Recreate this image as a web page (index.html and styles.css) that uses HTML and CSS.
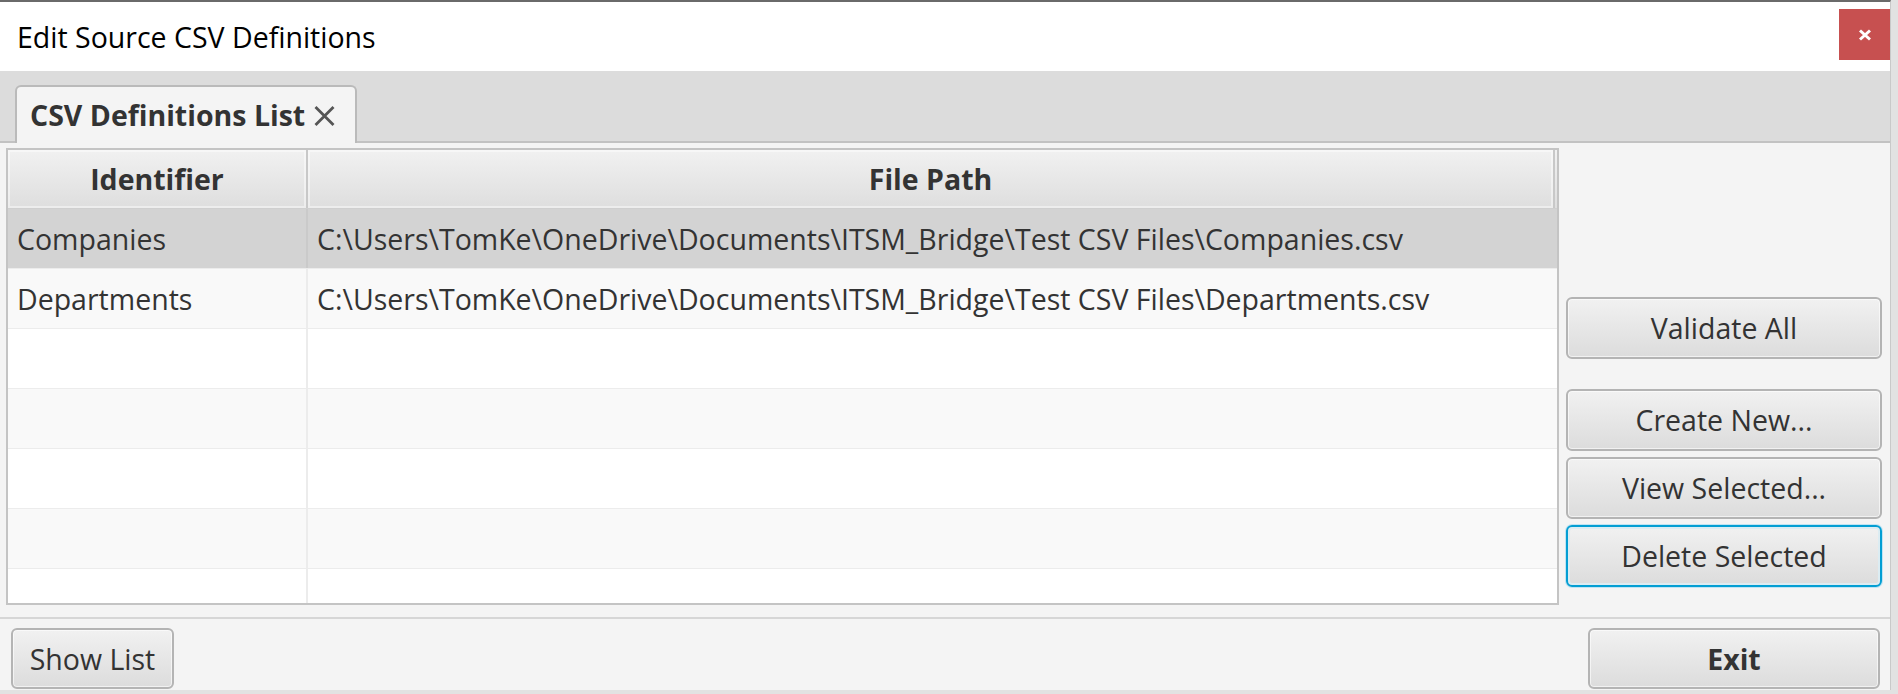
FILE: index.html
```html
<!DOCTYPE html>
<html lang="en">
<head>
    <meta charset="UTF-8">
    <title>Edit Source CSV Definitions</title>
    <link rel="stylesheet" href="styles.css">
</head>
<body>
    <div class="window">
        <div class="titlebar">
            <span class="title">Edit Source CSV Definitions</span>
            <button class="btn-close" title="Close">
                <svg width="14" height="12" viewBox="0 0 14 12"><path d="M2 1.5 L12 10.5 M12 1.5 L2 10.5" stroke="#fff" stroke-width="3"/></svg>
            </button>
        </div>

        <div class="tabbar">
            <div class="tab">
                <span class="tab-label">CSV Definitions List</span>
                <svg class="tab-x" width="21" height="20" viewBox="0 0 21 20"><path d="M1.5 1 L19.5 19 M19.5 1 L1.5 19" stroke="#555" stroke-width="2.8"/></svg>
            </div>
        </div>

        <div class="content">
            <div class="table">
                <div class="row header">
                    <div class="cell col-id">Identifier</div>
                    <div class="cell col-path">File Path</div>
                    <div class="filler"></div>
                </div>
                <div class="row selected">
                    <div class="cell col-id">Companies</div>
                    <div class="cell col-path">C:\Users\TomKe\OneDrive\Documents\ITSM_Bridge\Test CSV Files\Companies.csv</div>
                </div>
                <div class="row odd">
                    <div class="cell col-id">Departments</div>
                    <div class="cell col-path">C:\Users\TomKe\OneDrive\Documents\ITSM_Bridge\Test CSV Files\Departments.csv</div>
                </div>
                <div class="row"><div class="cell col-id"></div><div class="cell col-path"></div></div>
                <div class="row odd"><div class="cell col-id"></div><div class="cell col-path"></div></div>
                <div class="row"><div class="cell col-id"></div><div class="cell col-path"></div></div>
                <div class="row odd"><div class="cell col-id"></div><div class="cell col-path"></div></div>
                <div class="row"><div class="cell col-id"></div><div class="cell col-path"></div></div>
            </div>

            <div class="side">
                <button class="btn btn-validate">Validate All</button>
                <button class="btn">Create New...</button>
                <button class="btn">View Selected...</button>
                <button class="btn focused">Delete Selected</button>
            </div>
        </div>

        <div class="bottombar">
            <button class="btn btn-show">Show List</button>
            <button class="btn btn-exit">Exit</button>
        </div>
    </div>
</body>
</html>
```

FILE: styles.css
```css
body {
    margin: 0;
    background-color: #e2e2e2;
    font-family: "Open Sans", "Noto Sans", sans-serif;
    overflow: hidden;
}

.window {
    width: 1890px;
    height: 688px;
    border-top: 2px solid #6a6a6a;
    border-right: 1px solid #c9c9c9;
    display: flex;
    flex-direction: column;
    background-color: #f4f4f4;
}

/* window caption */
.titlebar {
    flex-shrink: 0;
    height: 69px;
    background-color: white;
    display: flex;
    align-items: center;
    justify-content: space-between;
    padding-left: 17px;
}

.title {
    font-size: 28.5px;
    color: #000;
}

.btn-close {
    width: 51px;
    height: 51px;
    margin-top: -4px;
    border: none;
    padding: 0;
    background-color: #c75050;
    display: flex;
    align-items: center;
    justify-content: center;
}

/* tab header */
.tabbar {
    flex-shrink: 0;
    height: 72px;
    box-sizing: border-box;
    background-color: #dcdcdc;
    border-bottom: 2px solid #c2c2c2;
    display: flex;
    align-items: flex-end;
    padding-left: 15px;
}

.tab {
    height: 58px;
    width: 342px;
    box-sizing: border-box;
    background-color: #f4f4f4;
    border: 2px solid #bababa;
    border-bottom: none;
    border-radius: 6px 6px 0 0;
    margin-bottom: -2px;
    display: flex;
    align-items: center;
    padding-left: 13px;
    gap: 9px;
}

.tab-label {
    font-size: 28.5px;
    font-weight: bold;
    color: #333;
}

.tab-x {
    margin-top: 2px;
}

/* table and side buttons */
.content {
    flex: 1;
    min-height: 0;
    display: flex;
    padding: 5px 0 10px 6px;
    border-bottom: 2px solid #d6d6d6;
}

.table {
    width: 1553px;
    height: 457px;
    box-sizing: border-box;
    border: 2px solid #c4c4c4;
    background-color: white;
    overflow: hidden;
}

.row {
    display: flex;
    height: 60px;
    border-bottom: 1px solid #ececec;
    box-sizing: border-box;
}

.row.odd {
    background-color: #f9f9f9;
}

.row.selected {
    background-color: #d3d3d3;
}

.cell {
    box-sizing: border-box;
    display: flex;
    align-items: center;
    padding-left: 9px;
    font-size: 28.5px;
    color: #333;
    white-space: nowrap;
}

.col-id {
    width: 300px;
    border-right: 2px solid #ececec;
}

.col-path {
    flex: 1;
}

.row.selected .col-id {
    border-right-color: #cacaca;
}

.header {
    height: 59px;
    background: linear-gradient(#f1f1f1, #dedede);
    border-bottom: 1px solid #cfcfcf;
}

.header .cell {
    justify-content: center;
    padding-left: 0;
    font-weight: bold;
    border-right: 2px solid #c8c8c8;
    box-shadow: inset 0 0 0 2px rgba(255, 255, 255, 0.45);
}

.filler {
    width: 2px;
}

.side {
    flex: 1;
    display: flex;
    flex-direction: column;
    justify-content: flex-end;
    padding: 0 8px 20px 7px;
    gap: 6px;
}

.btn {
    flex-shrink: 0;
    height: 62px;
    box-sizing: border-box;
    border: 2px solid #b4b4b4;
    border-radius: 6px;
    background: linear-gradient(#f1f1f1, #dcdcdc);
    box-shadow: inset 0 0 0 1px rgba(255, 255, 255, 0.6);
    font-family: inherit;
    font-size: 28.5px;
    color: #333;
    padding: 0;
}

.btn-validate {
    margin-bottom: 24px;
}

.btn.focused {
    border-color: #039ed3;
    box-shadow: 0 0 0 1px #bfe4f3, inset 0 0 0 2px #dcecf2;
}

/* footer buttons */
.bottombar {
    flex-shrink: 0;
    height: 71px;
    display: flex;
    justify-content: space-between;
    align-items: flex-start;
    padding: 9px 10px 0 11px;
    box-sizing: border-box;
}

.btn-show {
    width: 163px;
    height: 61px;
}

.btn-exit {
    width: 292px;
    height: 61px;
    font-weight: bold;
}
```
